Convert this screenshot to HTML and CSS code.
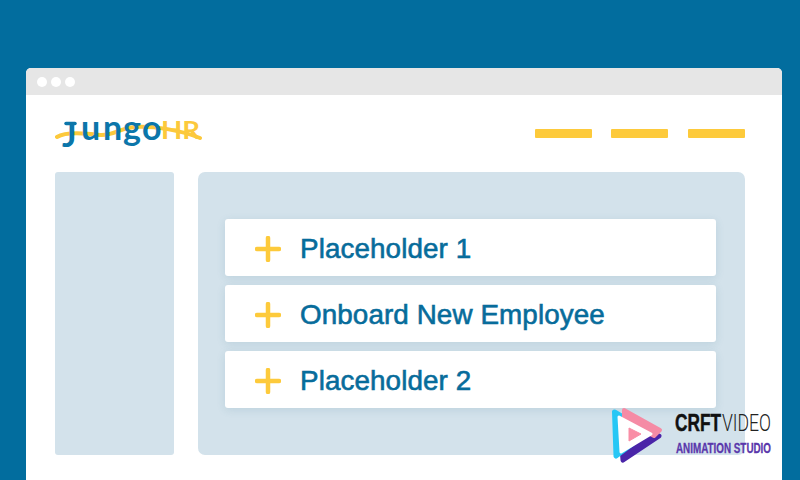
FILE: index.html
```html
<!DOCTYPE html>
<html lang="en">
<head>
<meta charset="utf-8">
<title>JungoHR</title>
<link rel="stylesheet" href="styles.css">
</head>
<body>
<div class="window">
  <div class="titlebar"><span class="dot"></span><span class="dot"></span><span class="dot"></span></div>
  <div class="content">
    <header class="header">
      <svg class="logo" width="150" height="34" viewBox="0 0 150 34">
        <path class="swoosh" d="M2 19C10 14 30 15 45 17C58 18 65 10 80 9C100 8 125 12 145 20"/>
        <path class="logo-bar" d="M11 5.500H20"/>
        <text class="logo-jungo"><tspan x="7" y="29">J</tspan><tspan x="26" y="22">u</tspan><tspan x="48" y="22">n</tspan><tspan x="68" y="22">g</tspan><tspan x="87" y="22">o</tspan></text>
        <text class="logo-hr" x="106" y="21" textLength="39" lengthAdjust="spacingAndGlyphs">HR</text>
      </svg>
      <nav class="nav"><span class="dash"></span><span class="dash dash-mid"></span><span class="dash"></span></nav>
    </header>
    <div class="columns">
      <aside class="sidebar"></aside>
      <main class="main">
        <div class="card"><svg class="plus" width="26" height="26" viewBox="0 0 26 26"><path d="M13 2v22M2 13h22"/></svg><span class="label">Placeholder 1</span></div>
        <div class="card"><svg class="plus" width="26" height="26" viewBox="0 0 26 26"><path d="M13 2v22M2 13h22"/></svg><span class="label">Onboard New Employee</span></div>
        <div class="card"><svg class="plus" width="26" height="26" viewBox="0 0 26 26"><path d="M13 2v22M2 13h22"/></svg><span class="label">Placeholder 2</span></div>
      </main>
    </div>
  </div>
</div>
<div class="watermark">
  <svg width="54" height="60" viewBox="0 0 54 60">
    <path class="wm-purple" d="M10 16L49 30L13 54Z"/>
    <path class="wm-cyan" d="M4.500 6L38 26L6 50Z"/>
    <path class="wm-pink" d="M14 4L50 24L44 30L14 14Z"/>
    <path class="wm-white" d="M9 11L41 28L11 46Z"/>
    <path class="wm-inner" d="M19 22L31 28L19 35Z"/>
  </svg>
  <svg class="wm-text" width="125" height="52" viewBox="0 0 125 52">
    <text class="wm-crft" x="0" y="25" textLength="46" lengthAdjust="spacingAndGlyphs">CRFT</text>
    <text class="wm-video" x="47" y="25" textLength="49" lengthAdjust="spacingAndGlyphs">VIDEO</text>
    <text class="wm-sub" x="1" y="47" textLength="95" lengthAdjust="spacingAndGlyphs">ANIMATION STUDIO</text>
  </svg>
</div>
</body>
</html>
```

FILE: styles.css
```css
* { box-sizing: border-box; }
html, body { margin: 0; height: 100%; }
body {
  width: 800px;
  height: 480px;
  overflow: hidden;
  background: #026d9e;
  padding: 68px 18px 0 26px;
  position: relative;
  font-family: "Liberation Sans", Arial, sans-serif;
}
.window {
  height: 412px;
  background: #fff;
  border-radius: 5px 5px 0 0;
  overflow: hidden;
}
.titlebar {
  height: 27px;
  background: #e6e6e6;
  display: flex;
  align-items: center;
  gap: 4px;
  padding-left: 11px;
}
.dot { width: 10px; height: 10px; border-radius: 50%; background: #fff; }
.content { padding: 0 37px 0 29px; }
.header {
  height: 77px;
  display: flex;
  align-items: center;
}
.logo { display: block; margin-top: 3px; flex: none; }
.logo-jungo {
  font-family: "Lato", sans-serif;
  font-weight: 700;
  font-size: 34px;
  fill: #0b76aa;
}
.logo-bar { fill: none; stroke: #0b76aa; stroke-width: 3.5; stroke-linecap: round; }
.logo-hr {
  font-family: "Lato", sans-serif;
  font-weight: 700;
  font-size: 24px;
  fill: #fcc93c;
}
.swoosh { fill: none; stroke: #fcc93c; stroke-width: 4; stroke-linecap: round; }
.nav { display: flex; margin-left: auto; margin-top: -1px; }
.dash { width: 57px; height: 9px; background: #fdca3b; border-radius: 1px; }
.dash-mid { margin: 0 20px 0 19px; }
.columns { display: flex; gap: 24px; }
.sidebar { width: 119px; height: 283px; background: #d3e2eb; border-radius: 3px; }
.main {
  flex: 1;
  height: 283px;
  background: #d3e2eb;
  border-radius: 7px;
  padding: 47px 29px 47px 27px;
  display: flex;
  flex-direction: column;
  gap: 9px;
}
.card {
  height: 57px;
  background: #fff;
  border-radius: 3px;
  box-shadow: 0 2px 8px rgba(60, 110, 140, 0.14);
  display: flex;
  align-items: center;
  padding: 3px 0 0 30px;
  gap: 19px;
}
.plus { display: block; flex: none; }
.plus path { fill: none; stroke: #fdca3b; stroke-width: 4.5; stroke-linecap: round; }
.label { font-size: 27.8px; letter-spacing: 0.1px; color: #076c9b; -webkit-text-stroke: 0.6px #076c9b; }
.watermark {
  position: absolute;
  left: 610px;
  top: 406px;
  display: flex;
  align-items: flex-start;
}
.watermark svg { display: block; flex: none; }
.wm-text { margin-left: 11px; }
.wm-purple { fill: #4a25a8; stroke: #4a25a8; stroke-width: 5; stroke-linejoin: round; }
.wm-cyan { fill: #27c7f5; stroke: #27c7f5; stroke-width: 5; stroke-linejoin: round; }
.wm-pink { fill: #f58ba5; stroke: #f58ba5; stroke-width: 4; stroke-linejoin: round; }
.wm-white { fill: #fff; stroke: #fff; stroke-width: 3; stroke-linejoin: round; }
.wm-inner { fill: #f98ea6; stroke: #f98ea6; stroke-width: 1; stroke-linejoin: round; }
.wm-crft { font-family: "Liberation Sans Narrow", "Liberation Sans", sans-serif; font-weight: 700; font-size: 24px; fill: #111; stroke: #111; stroke-width: 0.5px; }
.wm-video { font-family: "Roboto", "Liberation Sans Narrow", sans-serif; font-weight: 300; font-size: 24px; fill: #222; }
.wm-sub { font-family: "Liberation Sans Narrow", "Liberation Sans", sans-serif; font-weight: 700; font-size: 14px; fill: #5a37ab; stroke: #5a37ab; stroke-width: 0.3px; }
```
